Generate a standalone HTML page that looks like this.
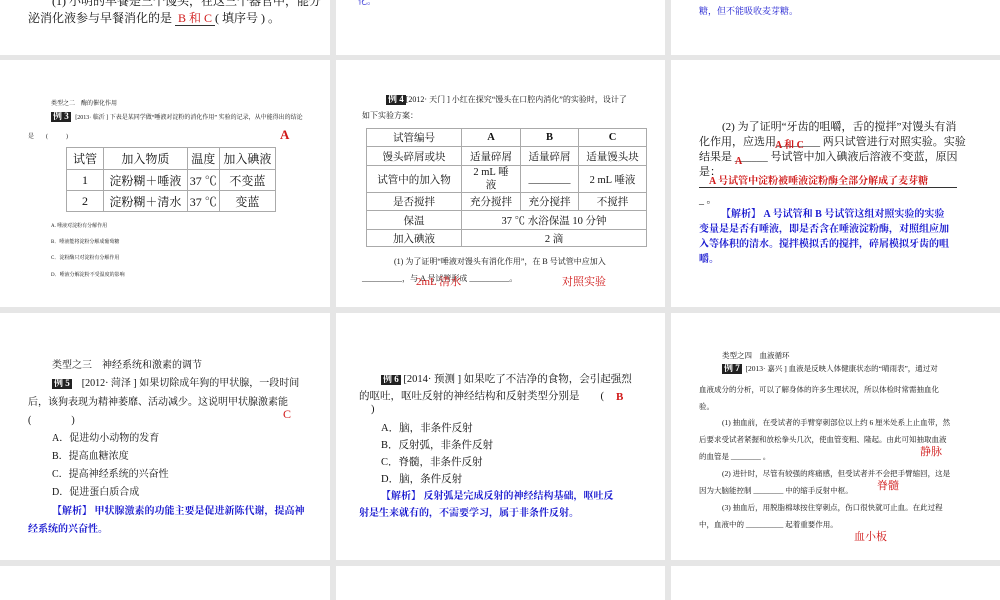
<!DOCTYPE html>
<html><head><meta charset="utf-8"><style>
body{margin:0;width:1000px;height:600px;background:#e6e6e6;position:relative;overflow:hidden;font-family:"Liberation Serif","Noto Serif CJK SC",serif;color:#111}
.p{position:absolute;background:#fff;overflow:hidden}
.t{position:absolute;white-space:nowrap}
.r{color:#d01818}.b{color:#1a1ad0}
.li{display:inline-block;background:#222;color:#fff;font-weight:bold;padding:0 2px;line-height:1.1}
table{position:absolute;border-collapse:collapse}
td{border:1px solid #aaa;text-align:center;padding:0}
</style></head><body>
<!-- row 0 -->
<div class="p" style="left:0;top:0;width:330px;height:55px">
<div class="t" style="left:52px;top:-8px;font-size:12px">(1) 小明的早餐是三个馒头，在这三个器官中，能分</div>
<div class="t" style="left:28px;top:9px;font-size:12px">泌消化液参与早餐消化的是 <span style="border-bottom:1px solid #333"><span class="r">&nbsp;B 和 C&nbsp;</span></span>( 填序号 ) 。</div>
</div>
<div class="p" style="left:336px;top:0;width:329px;height:55px"><div class="t b" style="left:22px;top:-6px;font-size:9px">化。</div></div>
<div class="p" style="left:671px;top:0;width:329px;height:55px"><div class="t b" style="left:28px;top:4px;font-size:9px">糖，但不能吸收麦芽糖。</div></div>

<!-- row 1 -->
<div class="p" style="left:0;top:60px;width:330px;height:247px">
<div class="t" style="left:51px;top:38px;font-size:6px">类型之二　酶的催化作用</div>
<div class="t" style="left:51px;top:52px;font-size:6px"><span class="li" style="font-size:9px">例 3</span>&nbsp;&nbsp;&nbsp;[2013· 临沂 ] 下表是某同学做“唾液对淀粉的消化作用” 实验的记录，从中能得出的结论</div>
<div class="t" style="left:28px;top:71px;font-size:6px">是　　(　　　)</div>
<div class="t r" style="left:280px;top:67px;font-size:13px;font-weight:bold">A</div>
<table style="left:66px;top:87px;font-size:12px;width:210px">
<tr style="height:22px"><td style="width:36px">试管</td><td>加入物质</td><td>温度</td><td>加入碘液</td></tr>
<tr style="height:21px"><td>1</td><td>淀粉糊＋唾液</td><td>37 ℃</td><td>不变蓝</td></tr>
<tr style="height:21px"><td>2</td><td>淀粉糊＋清水</td><td>37 ℃</td><td>变蓝</td></tr>
</table>
<div class="t" style="left:51px;top:162px;font-size:5px">A. 唾液对淀粉有分解作用</div>
<div class="t" style="left:51px;top:178px;font-size:5px">B．唾液能将淀粉分解成葡萄糖</div>
<div class="t" style="left:51px;top:194px;font-size:5px">C．淀粉酶只对淀粉有分解作用</div>
<div class="t" style="left:51px;top:211px;font-size:5px">D．唾液分解淀粉不受温度的影响</div>
</div>

<div class="p" style="left:336px;top:60px;width:329px;height:247px">
<div class="t" style="left:50px;top:34px;font-size:8px"><span class="li" style="font-size:9px">例 4</span>[2012· 天门 ] 小红在探究“馒头在口腔内消化”的实验时，设计了</div>
<div class="t" style="left:26px;top:50px;font-size:8px">如下实验方案：</div>
<table style="left:30px;top:68px;font-size:10.5px;width:281px">
<tr style="height:18px"><td style="width:94px">试管编号</td><td style="width:58px"><b>A</b></td><td style="width:57px"><b>B</b></td><td><b>C</b></td></tr>
<tr style="height:19px"><td>馒头碎屑或块</td><td>适量碎屑</td><td>适量碎屑</td><td>适量馒头块</td></tr>
<tr style="height:26px"><td>试管中的加入物</td><td style="line-height:13px">2 mL 唾<br>液</td><td>________</td><td>2 mL 唾液</td></tr>
<tr style="height:18px"><td>是否搅拌</td><td>充分搅拌</td><td>充分搅拌</td><td>不搅拌</td></tr>
<tr style="height:19px"><td>保温</td><td colspan="3">37 ℃ 水浴保温 10 分钟</td></tr>
<tr style="height:17px"><td>加入碘液</td><td colspan="3">2 滴</td></tr>
</table>
<div class="t" style="left:58px;top:196px;font-size:8px">(1) 为了证明“唾液对馒头有消化作用”，在 B 号试管中应加入</div>
<div class="t" style="left:26px;top:213px;font-size:8px">__________，与 A 号试管形成 __________。</div>
<div class="t r" style="left:80px;top:213px;font-size:11px">2mL 清水</div>
<div class="t r" style="left:226px;top:213px;font-size:11px">对照实验</div>
</div>

<div class="p" style="left:671px;top:60px;width:329px;height:247px">
<div class="t" style="left:51px;top:58px;font-size:11px">(2) 为了证明“牙齿的咀嚼，舌的搅拌”对馒头有消</div>
<div class="t" style="left:28px;top:73px;font-size:11px">化作用，应选用________ 两只试管进行对照实验。实验</div>
<div class="t r" style="left:104px;top:76px;font-size:10px;font-weight:bold">A 和 C</div>
<div class="t" style="left:28px;top:88px;font-size:11px">结果是 ______ 号试管中加入碘液后溶液不变蓝，原因</div>
<div class="t r" style="left:64px;top:96px;font-size:10px;font-weight:bold">A</div>
<div class="t" style="left:28px;top:103px;font-size:11px">是：</div>
<div class="t r" style="left:38px;top:112px;font-size:10px;font-weight:bold">A 号试管中淀粉被唾液淀粉酶全部分解成了麦芽糖</div>
<div style="position:absolute;left:28px;top:127px;width:258px;border-top:1px solid #333"></div>
<div class="t" style="left:28px;top:131px;font-size:10px">_ 。</div>
<div class="t b" style="left:50px;top:145px;font-size:10px;font-weight:bold">【解析】 A 号试管和 B 号试管这组对照实验的实验</div>
<div class="t b" style="left:28px;top:160px;font-size:10px;font-weight:bold">变量是是否有唾液，即是否含在唾液淀粉酶，对照组应加</div>
<div class="t b" style="left:28px;top:175px;font-size:10px;font-weight:bold">入等体积的清水。搅拌模拟舌的搅拌，碎屑模拟牙齿的咀</div>
<div class="t b" style="left:28px;top:190px;font-size:10px;font-weight:bold">嚼。</div>
</div>

<!-- row 2 -->
<div class="p" style="left:0;top:313px;width:330px;height:247px">
<div class="t" style="left:52px;top:43px;font-size:10px">类型之三　神经系统和激素的调节</div>
<div class="t" style="left:52px;top:61px;font-size:10px"><span class="li" style="font-size:9px">例 5</span>&nbsp;&nbsp;&nbsp;&nbsp;[2012· 菏泽 ] 如果切除成年狗的甲状腺，一段时间</div>
<div class="t" style="left:28px;top:80px;font-size:10px">后，该狗表现为精神萎靡、活动减少。这说明甲状腺激素能</div>
<div class="t" style="left:28px;top:98px;font-size:10px">(　　　　)</div>
<div class="t r" style="left:283px;top:94px;font-size:12px">C</div>
<div class="t" style="left:52px;top:116px;font-size:10px">A．促进幼小动物的发育</div>
<div class="t" style="left:52px;top:134px;font-size:10px">B．提高血糖浓度</div>
<div class="t" style="left:52px;top:152px;font-size:10px">C．提高神经系统的兴奋性</div>
<div class="t" style="left:52px;top:170px;font-size:10px">D．促进蛋白质合成</div>
<div class="t b" style="left:52px;top:189px;font-size:10px;font-weight:bold">【解析】 甲状腺激素的功能主要是促进新陈代谢，提高神</div>
<div class="t b" style="left:28px;top:207px;font-size:10px;font-weight:bold">经系统的兴奋性。</div>
</div>

<div class="p" style="left:336px;top:313px;width:329px;height:247px">
<div class="t" style="left:45px;top:58px;font-size:10.5px"><span class="li" style="font-size:9px">例 6</span> [2014· 预测 ] 如果吃了不洁净的食物，会引起强烈</div>
<div class="t" style="left:23px;top:75px;font-size:10.5px">的呕吐，呕吐反射的神经结构和反射类型分别是　　(</div>
<div class="t r" style="left:280px;top:78px;font-size:11px;font-weight:bold">B</div>
<div class="t" style="left:35px;top:91px;font-size:10.5px">)</div>
<div class="t" style="left:45px;top:107px;font-size:10.5px">A．脑，非条件反射</div>
<div class="t" style="left:45px;top:124px;font-size:10.5px">B．反射弧，非条件反射</div>
<div class="t" style="left:45px;top:141px;font-size:10.5px">C．脊髓，非条件反射</div>
<div class="t" style="left:45px;top:158px;font-size:10.5px">D．脑，条件反射</div>
<div class="t b" style="left:45px;top:174px;font-size:10px;font-weight:bold">【解析】 反射弧是完成反射的神经结构基础，呕吐反</div>
<div class="t b" style="left:23px;top:191px;font-size:10px;font-weight:bold">射是生来就有的，不需要学习，属于非条件反射。</div>
</div>

<div class="p" style="left:671px;top:313px;width:329px;height:247px">
<div class="t" style="left:51px;top:37px;font-size:7.5px">类型之四　血液循环</div>
<div class="t" style="left:51px;top:50px;font-size:7.5px"><span class="li" style="font-size:9px">例 7</span>&nbsp;&nbsp;[2013· 嘉兴 ] 血液是反映人体健康状态的“晴雨表”，通过对</div>
<div class="t" style="left:28px;top:71px;font-size:7.5px">血液成分的分析，可以了解身体的许多生理状况，所以体检时常需抽血化</div>
<div class="t" style="left:28px;top:88px;font-size:7.5px">验。</div>
<div class="t" style="left:51px;top:104px;font-size:7.5px">(1) 抽血前，在受试者的手臂穿刺部位以上约 6 厘米处系上止血带，然</div>
<div class="t" style="left:28px;top:121px;font-size:7.5px">后要求受试者紧握和放松拳头几次，使血管变粗、隆起。由此可知抽取血液</div>
<div class="t" style="left:28px;top:138px;font-size:7.5px">的血管是 ________ 。</div>
<div class="t r" style="left:249px;top:130px;font-size:11px">静脉</div>
<div class="t" style="left:51px;top:155px;font-size:7.5px">(2) 进针时，尽管有较强的疼痛感，但受试者并不会把手臂缩回，这是</div>
<div class="t" style="left:28px;top:172px;font-size:7.5px">因为大脑能控制 ________ 中的缩手反射中枢。</div>
<div class="t r" style="left:206px;top:164px;font-size:11px">脊髓</div>
<div class="t" style="left:51px;top:189px;font-size:7.5px">(3) 抽血后，用脱脂棉球按住穿刺点，伤口很快就可止血。在此过程</div>
<div class="t" style="left:28px;top:206px;font-size:7.5px">中，血液中的 __________ 起着重要作用。</div>
<div class="t r" style="left:183px;top:215px;font-size:11px">血小板</div>
</div>

<!-- row 3 -->
<div class="p" style="left:0;top:566px;width:330px;height:34px"></div>
<div class="p" style="left:336px;top:566px;width:329px;height:34px"></div>
<div class="p" style="left:671px;top:566px;width:329px;height:34px"></div>
</body></html>
